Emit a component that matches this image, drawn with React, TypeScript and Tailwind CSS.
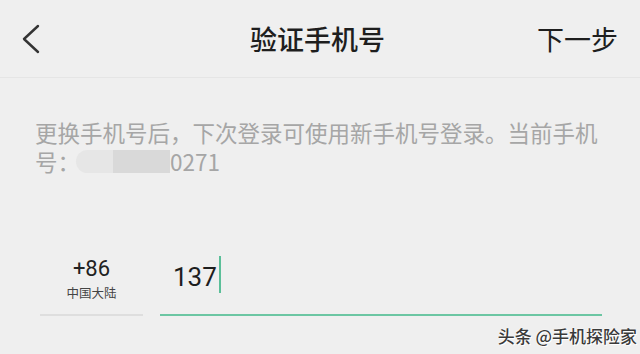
import React from "react";

export default function App() {
  return (
    <div
      className="relative w-[640px] h-[354px] overflow-hidden bg-[#efefef] text-[#222]"
      style={{ fontFamily: '"Noto Sans CJK SC", "Noto Sans", sans-serif' }}
    >
      {/* Header */}
      <div className="grid grid-cols-[1fr_auto_1fr] items-center h-[78px] border-b border-[#e5e5e5]">
        <div className="pl-[21px] flex items-center">
          <svg width="20" height="30" viewBox="0 0 20 30" fill="none">
            <path d="M17 2 L3 15 L17 28" stroke="#333" strokeWidth="2.4" strokeLinecap="round" strokeLinejoin="round" />
          </svg>
        </div>
        <div className="text-[27px] leading-[32px] font-medium text-[#1e1e1e] -ml-[5px]">验证手机号</div>
        <div className="flex justify-end pr-[22px]">
          <span className="text-[27px] leading-[32px] text-[#1e1e1e]">下一步</span>
        </div>
      </div>

      {/* Description */}
      <div className="mt-[40px] pl-[35px] pr-[30px] text-[22.5px] leading-[29px] text-[#a6a6a6]">
        更换手机号后，下次登录可使用新手机号登录。当前手机号：
        <span className="relative inline-block align-top w-[90px] h-[29px]">
          <span className="absolute left-[-4px] top-[3px] h-[23px] w-[42px] rounded-l-full bg-[#e6e6e6]"></span>
          <span className="absolute left-[33px] top-[3px] h-[23px] w-[57px] bg-[#d9d9d9]"></span>
        </span>
        0271
      </div>

      {/* Phone input row */}
      <div className="mt-[72px] flex pl-[40px] pr-[38px] h-[68px]">
        <div className="w-[103px] flex flex-col items-center pt-[8px] border-b-2 border-[#dedede]">
          <div className="text-[22px] leading-[26px] text-[#222]" style={{ fontFamily: 'Roboto, "Noto Sans", sans-serif' }}>+86</div>
          <div className="mt-[3px] text-[12.5px] leading-[16px] text-[#444]">中国大陆</div>
        </div>
        <div className="ml-[17px] flex-1 flex items-start pt-[8px] pl-[13px] border-b-2 border-[#6cc6a3]">
          <span className="mt-[3px] text-[26px] leading-[37px] text-[#1e1e1e]" style={{ fontFamily: 'Roboto, "Noto Sans", sans-serif' }}>137</span>
          <span className="ml-[2px] w-[2px] h-[37px] bg-[#5bbf99]"></span>
        </div>
      </div>

      {/* Watermark */}
      <div className="absolute right-[3px] bottom-[7px] text-[17px] leading-[22px] font-medium text-[#3a3a3a] [text-shadow:0_0_2px_#fff,0_0_1px_#fff,1px_1px_0_#fff]">
        头条 @手机探险家
      </div>
    </div>
  );
}
